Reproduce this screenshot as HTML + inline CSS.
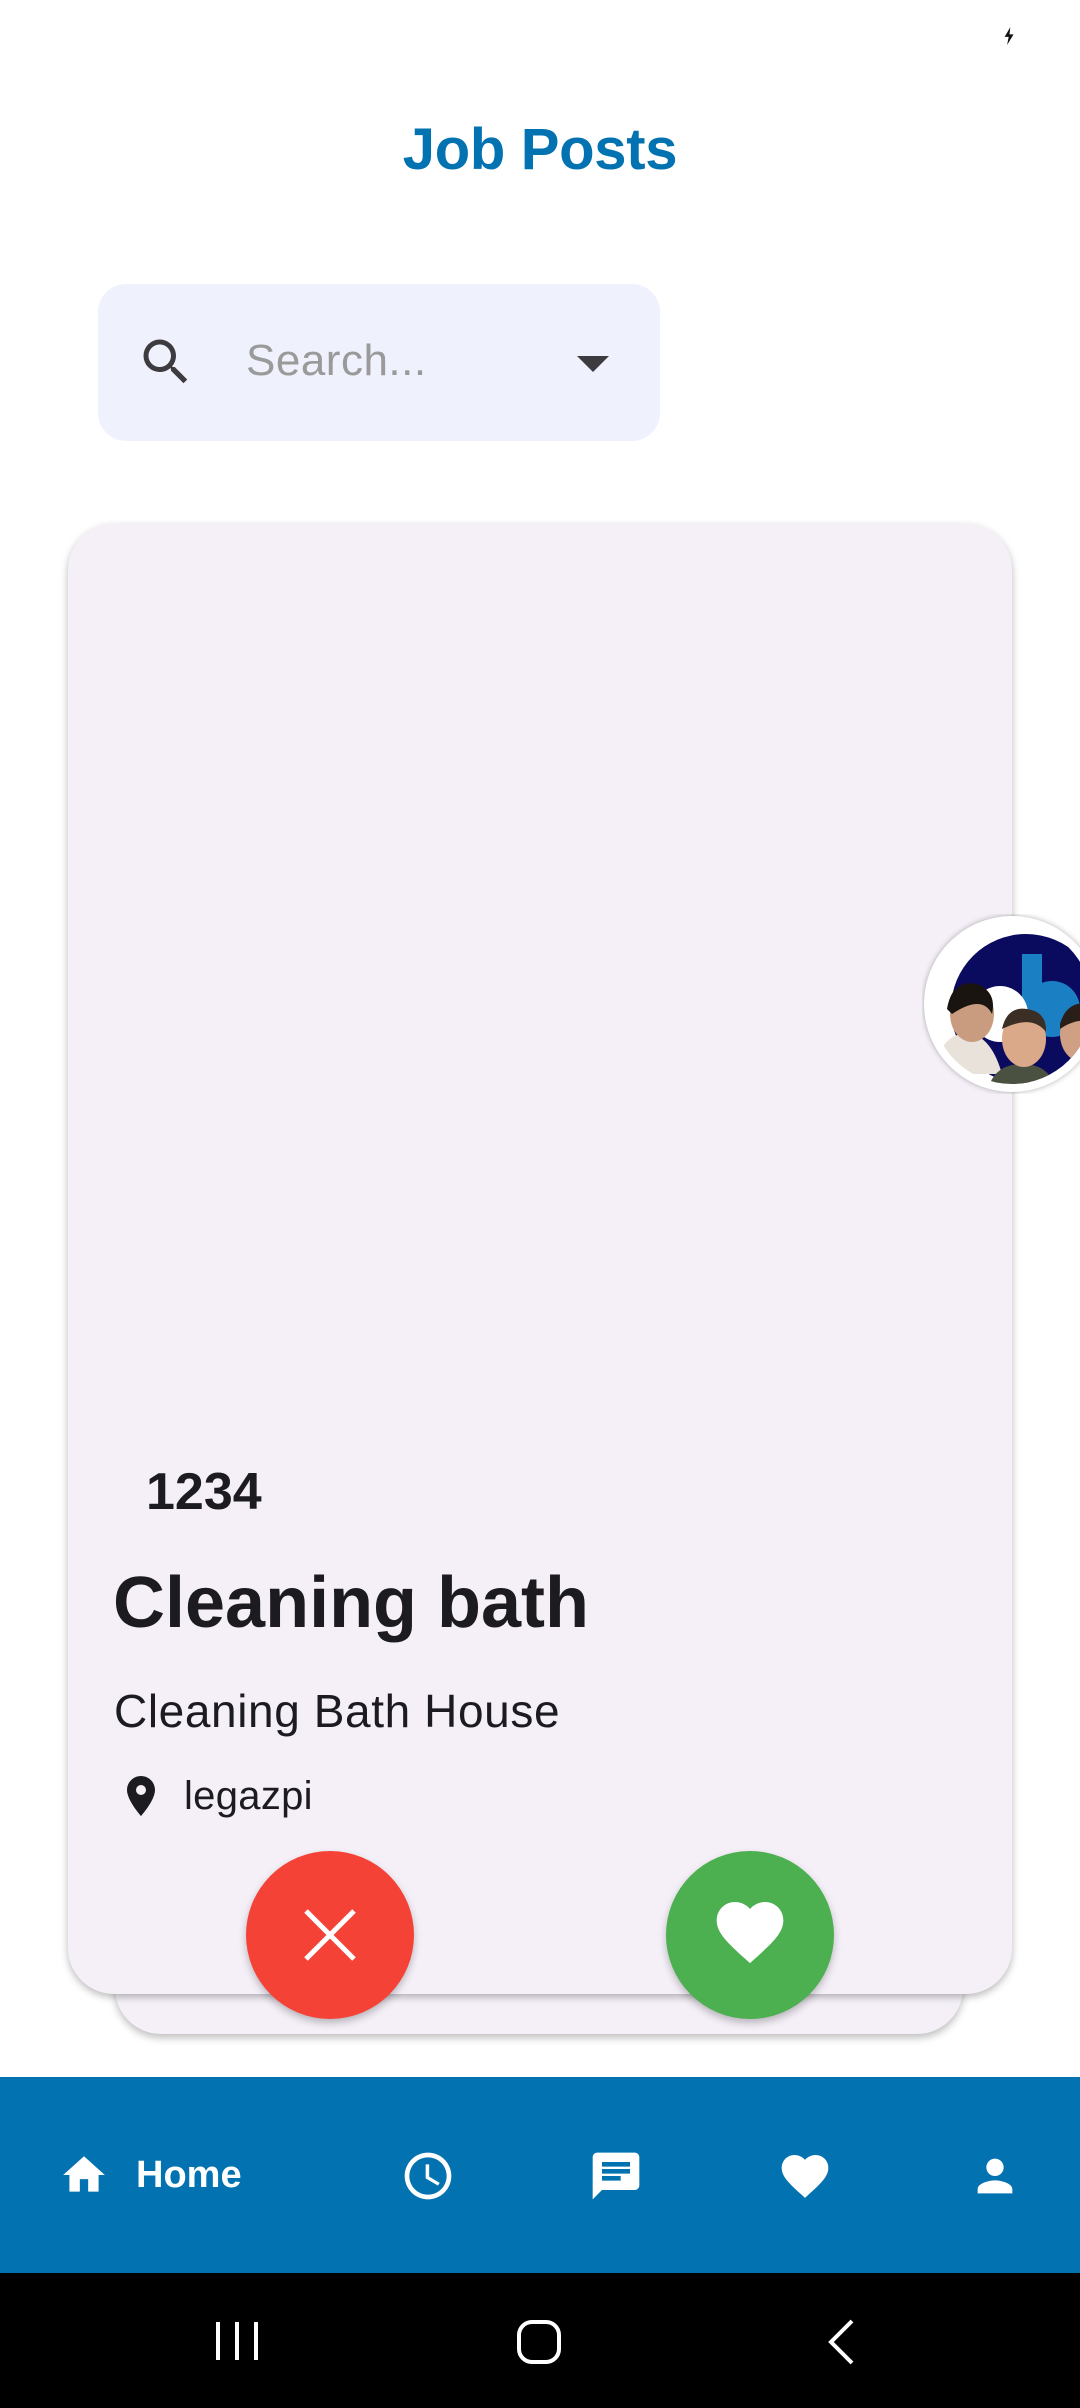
<!DOCTYPE html>
<html><head><meta charset="utf-8"><style>
html,body{margin:0;padding:0;}
body{width:1080px;height:2408px;position:relative;background:#fff;overflow:hidden;font-family:"Liberation Sans",sans-serif;}
.abs{position:absolute;}
.title{left:0;width:1080px;top:116px;text-align:center;color:#0372b0;font-weight:bold;font-size:58px;letter-spacing:-0.3px;}
.search{left:98px;top:284px;width:562px;height:157px;background:#eff2fd;border-radius:28px;}
.card2{left:115px;top:1700px;width:848px;height:334px;background:#f5f0f8;border-radius:46px;box-shadow:0 4px 8px rgba(0,0,0,.25);}
.card{left:68px;top:524px;width:944px;height:1470px;background:#f5f0f8;border-radius:46px;box-shadow:0 3px 8px rgba(0,0,0,.28);}
.t{color:#1c1b1f;}
.circ{width:168px;height:168px;border-radius:50%;box-shadow:0 4px 8px rgba(0,0,0,.25);}
.nav{left:0;top:2077px;width:1080px;height:196px;background:#0372b0;}
.sys{left:0;top:2273px;width:1080px;height:135px;background:#000;}
</style></head><body>
<svg class="abs" style="left:1003px;top:27px" width="13" height="18" viewBox="0 0 16 22"><path d="M9 0 L2 12 H7 L5 22 L13 9 H8 Z" fill="#111"/></svg>
<div class="abs title">Job Posts</div>
<div class="abs search"></div>
<svg class="abs" style="left:136px;top:332px" width="60" height="60" viewBox="0 0 24 24"><path fill="#3d3a40" d="M15.5 14h-.79l-.28-.27A6.47 6.47 0 0 0 16 9.5 6.5 6.5 0 1 0 9.5 16c1.61 0 3.09-.59 4.23-1.57l.27.28v.79l5 4.99L20.49 19l-4.99-5zm-6 0C7.01 14 5 11.99 5 9.5S7.01 5 9.5 5 14 7.01 14 9.5 11.99 14 9.5 14z"/></svg>
<div class="abs" style="left:246px;top:336px;font-size:44px;letter-spacing:0.5px;color:#9a9a9a;">Search...</div>
<svg class="abs" style="left:577px;top:354px" width="32" height="20" viewBox="0 0 32 20"><path d="M0 2 H32 L16 18 Z" fill="#3d3a40"/></svg>

<div class="abs card2"></div>
<div class="abs card"></div>

<div class="abs t" style="left:146px;top:1462px;font-size:52px;font-weight:bold;">1234</div>
<div class="abs t" style="left:113px;top:1562px;font-size:72px;font-weight:bold;letter-spacing:0px;">Cleaning bath</div>
<div class="abs t" style="left:114px;top:1684px;font-size:46px;letter-spacing:0.6px;">Cleaning Bath House</div>
<svg class="abs" style="left:117px;top:1772px" width="48" height="48" viewBox="0 0 24 24"><path fill="#1c1b1f" d="M12 2C8.13 2 5 5.13 5 9c0 5.25 7 13 7 13s7-7.75 7-13c0-3.87-3.13-7-7-7zm0 9.5a2.5 2.5 0 0 1 0-5 2.5 2.5 0 0 1 0 5z"/></svg>
<div class="abs t" style="left:184px;top:1774px;font-size:40px;letter-spacing:0.3px;">legazpi</div>

<div class="abs circ" style="left:246px;top:1851px;background:#f44336;"></div>
<svg class="abs" style="left:300px;top:1905px" width="60" height="60" viewBox="0 0 60 60"><path d="M6 6 L54 54 M54 6 L6 54" stroke="#fff" stroke-width="5"/></svg>
<div class="abs circ" style="left:666px;top:1851px;background:#4caf50;"></div>
<svg class="abs" style="left:710px;top:1892px" width="80" height="80" viewBox="0 0 24 24"><path fill="#fff" d="M12 21.35l-1.45-1.32C5.4 15.36 2 12.28 2 8.5 2 5.42 4.42 3 7.5 3c1.74 0 3.41.81 4.5 2.09C13.09 3.81 14.76 3 16.5 3 19.58 3 22 5.42 22 8.5c0 3.78-3.4 6.86-8.55 11.54L12 21.35z"/></svg>

<svg class="abs" style="left:922px;top:914px" width="180" height="180" viewBox="0 0 180 180">
<defs><clipPath id="c"><circle cx="90" cy="90" r="80"/></clipPath></defs>
<circle cx="90" cy="90" r="88" fill="#fff" style="filter:drop-shadow(0 0 3px rgba(0,0,0,.3))"/>
<g clip-path="url(#c)">
<rect x="0" y="0" width="180" height="180" fill="#fff"/>
<circle cx="104" cy="95" r="75" fill="#0a0a5e"/>
<rect x="100" y="40" width="20" height="60" fill="#1b7fc4"/>
<circle cx="130" cy="95" r="28" fill="#1b7fc4"/>
<circle cx="78" cy="100" r="28" fill="#fff"/>
<path d="M10 160 Q20 115 50 120 Q70 125 80 160 Z" fill="#e8e2da"/>
<ellipse cx="50" cy="100" rx="22" ry="28" fill="#c99b7f"/>
<path d="M25 95 Q30 65 55 70 Q75 78 70 100 Q60 80 30 100Z" fill="#1a1410"/>
<path d="M65 180 Q70 150 100 150 Q130 150 135 180Z" fill="#4a5140"/>
<ellipse cx="102" cy="125" rx="22" ry="28" fill="#d9a98a"/>
<path d="M80 115 Q85 92 105 95 Q125 98 124 118 Q110 100 80 115Z" fill="#3a2e25"/>
<ellipse cx="160" cy="120" rx="22" ry="28" fill="#d0a084"/>
<path d="M138 110 Q145 85 170 90 L180 100 L180 112 Q160 100 138 115Z" fill="#2a1f18"/>
</g></svg>

<div class="abs nav"></div>
<svg class="abs" style="left:59px;top:2150px" width="50" height="50" viewBox="0 0 24 24"><path fill="#fff" d="M10 20v-6h4v6h5v-8h3L12 3 2 12h3v8z"/></svg>
<div class="abs" style="left:136px;top:2154px;font-size:38px;font-weight:bold;color:#fff;">Home</div>
<svg class="abs" style="left:400px;top:2148px" width="56" height="56" viewBox="0 0 24 24"><path fill="#fff" d="M11.99 2C6.47 2 2 6.48 2 12s4.47 10 9.99 10C17.52 22 22 17.520 22 12S17.52 2 11.99 2zM12 20c-4.42 0-8-3.58-8-8s3.58-8 8-8 8 3.58 8 8-3.58 8-8 8zm.5-13H11v6l5.25 3.15.75-1.23-4.5-2.67z"/></svg>
<svg class="abs" style="left:588px;top:2148px" width="56" height="56" viewBox="0 0 24 24"><path fill="#fff" d="M20 2H4c-1.1 0-1.99.9-1.99 2L2 22l4-4h14c1.1 0 2-.9 2-2V4c0-1.1-.9-2-2-2zM6 9h12v2H6V9zm8 5H6v-2h8v2zm4-6H6V6h12v2z"/></svg>
<svg class="abs" style="left:777px;top:2148px" width="56" height="56" viewBox="0 0 24 24"><path fill="#fff" d="M12 21.35l-1.45-1.32C5.4 15.36 2 12.28 2 8.5 2 5.42 4.42 3 7.5 3c1.74 0 3.41.81 4.5 2.09C13.09 3.81 14.76 3 16.5 3 19.58 3 22 5.42 22 8.5c0 3.78-3.4 6.86-8.550 11.54L12 21.35z"/></svg>
<svg class="abs" style="left:969px;top:2150px" width="52" height="52" viewBox="0 0 24 24"><path fill="#fff" d="M12 12c2.21 0 4-1.79 4-4s-1.79-4-4-4-4 1.79-4 4 1.79 4 4 4zm0 2c-2.67 0-8 1.34-8 4v2h16v-2c0-2.66-5.33-4-8-4z"/></svg>

<div class="abs sys"></div>
<svg class="abs" style="left:212px;top:2318px" width="50" height="46" viewBox="0 0 50 46"><path d="M6 4V42 M25 4V42 M44 4V42" stroke="#fff" stroke-width="4"/></svg>
<svg class="abs" style="left:516px;top:2319px" width="46" height="46" viewBox="0 0 46 46"><rect x="3" y="3" width="40" height="40" rx="13" fill="none" stroke="#fff" stroke-width="4"/></svg>
<svg class="abs" style="left:826px;top:2318px" width="30" height="48" viewBox="0 0 30 48"><path d="M26 3 L5 24 L26 45" fill="none" stroke="#fff" stroke-width="4"/></svg>
</body></html>
